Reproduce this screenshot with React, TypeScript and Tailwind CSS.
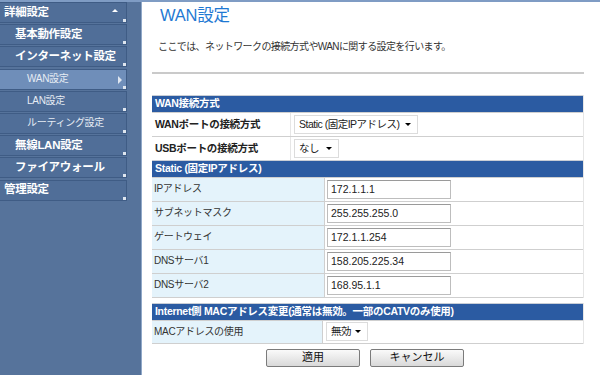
const jp = { fontFamily: '"Liberation Sans", "Noto Sans CJK JP", sans-serif' };

function NavItem({
  label,
  indent,
  bold = true,
  active = false,
  caret,
}: {
  label: string;
  indent: string;
  bold?: boolean;
  active?: boolean;
  caret?: "up" | "right";
}) {
  return (
    <div
      className={`relative h-[21px] w-[127px] mb-[1.2px] flex items-center border border-[#3f5c85] border-l-0 ${
        active ? "bg-[#6f8eb9]" : "bg-[#506e98]"
      } ${indent}`}
    >
      <span
        className={`${bold ? "font-bold text-[11.5px] text-white" : "text-[10px] text-[#e6ecf4]"} leading-none tracking-[-0.3px] whitespace-nowrap`}
      >
        {label}
      </span>
      {caret === "up" && (
        <span className="absolute right-[8px] top-[6px] w-0 h-0 border-x-[3px] border-x-transparent border-b-[3px] border-b-white" />
      )}
      {caret === "right" && (
        <span className="absolute right-[4px] top-[6px] w-0 h-0 border-y-[4px] border-y-transparent border-l-[4px] border-l-[#dfe6f0]" />
      )}
      <span className="absolute right-0 bottom-0 w-[3px] h-[3px] bg-[#dfe6ef]" />
    </div>
  );
}

function Header({ text }: { text: string }) {
  return (
    <div className="h-[17px] border-t border-[#c9ced6] bg-[#2b5ba2] flex items-center px-[3px]">
      <span className="text-white font-bold text-[10.5px] leading-none tracking-[-0.3px] whitespace-nowrap">{text}</span>
    </div>
  );
}

function Select({ text, w }: { text: string; w: string }) {
  return (
    <div
      className={`h-[19px] ${w} border border-[#dcdcdc] bg-white flex items-center justify-between gap-[4px] pl-[4px] pr-[6px]`}
    >
      <span className="text-[10.5px] text-[#222] leading-none tracking-[-0.5px] whitespace-nowrap">{text}</span>
      <span className="shrink-0 w-0 h-0 border-x-[3px] border-x-transparent border-t-[3px] border-t-black" />
    </div>
  );
}

function SelRow({ label, children }: { label: string; children: React.ReactNode }) {
  return (
    <div className="h-[24px] border-t border-[#cfcfcf] flex">
      <div className="w-[139px] flex items-center pl-[3px] border-r border-[#e6e6e6]">
        <span className="font-bold text-[10.5px] text-[#222] leading-none tracking-[-0.3px] whitespace-nowrap">{label}</span>
      </div>
      <div className="flex-1 flex items-center pl-[3px]">{children}</div>
    </div>
  );
}

function InputRow({ label, value }: { label: string; value: string }) {
  return (
    <div className="h-[24px] border-t border-[#cfcfcf] flex">
      <div className="w-[173px] bg-[#e4f3fb] flex items-center pl-[2px] border-r border-[#cfcfcf]">
        <span className="text-[10px] text-[#333] leading-none tracking-[-0.3px]">{label}</span>
      </div>
      <div className="flex-1 flex items-center pl-[2px]">
        <div className="w-[124px] h-[19px] border border-[#bdbdbd] border-t-[#9a9a9a] flex items-center pl-[3px]">
          <span className="text-[10.5px] text-[#222] leading-none">{value}</span>
        </div>
      </div>
    </div>
  );
}

function Btn({ text }: { text: string }) {
  return (
    <div className="w-[94px] h-[18px] rounded-[2px] border border-[#7b7b7b] bg-gradient-to-b from-[#fafafa] to-[#d9d9d9] flex items-center justify-center">
      <span className="text-[11px] text-[#111] leading-none">{text}</span>
    </div>
  );
}

export default function App() {
  return (
    <div className="w-[600px] h-[375px] overflow-hidden flex border-t-[2px] border-[#7f9cc4] bg-white" style={jp}>
      <aside className="w-[142px] shrink-0 bg-[#56739b] border-r border-[#90a8c8]">
        <NavItem label="詳細設定" indent="pl-[4px]" caret="up" />
        <NavItem label="基本動作設定" indent="pl-[15px]" />
        <NavItem label="インターネット設定" indent="pl-[15px]" />
        <NavItem label="WAN設定" indent="pl-[27px]" bold={false} active caret="right" />
        <NavItem label="LAN設定" indent="pl-[27px]" bold={false} />
        <NavItem label="ルーティング設定" indent="pl-[27px]" bold={false} />
        <NavItem label="無線LAN設定" indent="pl-[15px]" />
        <NavItem label="ファイアウォール" indent="pl-[15px]" />
        <NavItem label="管理設定" indent="pl-[4px]" />
      </aside>

      <main className="flex-1 pl-[10px] pr-[16px]">
        <h1 className="text-[16.5px] text-[#1f79d3] leading-none mt-[5px] ml-[8px] tracking-[-0.2px]">WAN設定</h1>
        <p className="text-[10px] text-[#333] leading-none mt-[18px] ml-[6px] tracking-[-0.6px]">
          ここでは、ネットワークの接続方式やWANに関する設定を行います。
        </p>
        <div className="h-[2px] bg-[#cacaca] mt-[20px]" />

        <div className="mt-[21px] border-r border-[#e6e6e6]">
          <Header text="WAN接続方式" />
          <SelRow label="WANポートの接続方式">
            <Select text="Static (固定IPアドレス)" w="w-[124px]" />
          </SelRow>
          <SelRow label="USBポートの接続方式">
            <Select text="なし" w="w-[45px]" />
          </SelRow>
          <Header text="Static (固定IPアドレス)" />
          <InputRow label="IPアドレス" value="172.1.1.1" />
          <InputRow label="サブネットマスク" value="255.255.255.0" />
          <InputRow label="ゲートウェイ" value="172.1.1.254" />
          <InputRow label="DNSサーバ1" value="158.205.225.34" />
          <InputRow label="DNSサーバ2" value="168.95.1.1" />
          <div className="border-t border-[#cfcfcf]" />
        </div>

        <div className="mt-[5px] border-r border-[#e6e6e6]">
          <Header text="Internet側 MACアドレス変更(通常は無効。一部のCATVのみ使用)" />
          <div className="h-[24px] border-t border-[#cfcfcf] border-b flex">
            <div className="w-[171px] bg-[#e4f3fb] flex items-center pl-[2px] border-r border-[#cfcfcf]">
              <span className="text-[10px] text-[#333] leading-none tracking-[-0.3px]">MACアドレスの使用</span>
            </div>
            <div className="flex-1 flex items-center pl-[3px]">
              <Select text="無効" w="w-[42px]" />
            </div>
          </div>
        </div>

        <div className="flex gap-[10px] ml-[114px] mt-[5px]">
          <Btn text="適用" />
          <Btn text="キャンセル" />
        </div>
      </main>
    </div>
  );
}
